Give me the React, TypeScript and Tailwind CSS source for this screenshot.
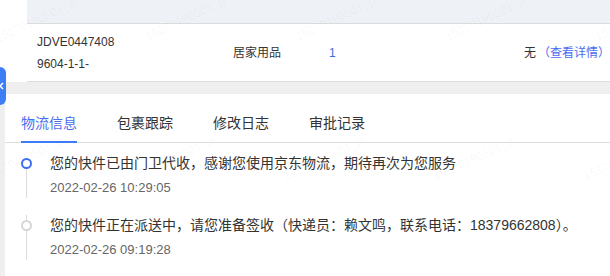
import React from 'react';

const marks = [
  { x: -4, y: 30 }, { x: 146, y: 28 }, { x: 296, y: 28 }, { x: 446, y: 28 }, { x: 596, y: 28 },
  { x: -16, y: 168 }, { x: 134, y: 168 }, { x: 284, y: 168 }, { x: 434, y: 168 }, { x: 584, y: 168 },
];

const tabs = ['物流信息', '包裹跟踪', '修改日志', '审批记录'];

const events = [
  { text: '您的快件已由门卫代收，感谢您使用京东物流，期待再次为您服务', time: '2022-02-26 10:29:05', active: true },
  { text: '您的快件正在派送中，请您准备签收（快递员：赖文鸣，联系电话：18379662808）。', time: '2022-02-26 09:19:28', active: false },
];

const App: React.FC = () => {
  return (
    <div
      className="relative w-[610px] h-[276px] overflow-hidden bg-[#efefef] text-[#333]"
      style={{ fontFamily: '"Liberation Sans", "Noto Sans CJK SC", sans-serif' }}
    >
      {/* order table */}
      <div className="flex bg-white">
        <div className="w-[27px] shrink-0" />
        <div className="flex-1">
          <div className="h-[24px] bg-[#eef1f6] border-b border-[#dcdcdc]" />
          <div className="h-[58px] flex items-center text-[12px] border-b border-[#dcdcdc]">
            <div className="w-[206px] pl-[10px] leading-[22px]">
              <div>JDVE0447408</div>
              <div>9604-1-1-</div>
            </div>
            <div className="w-[96px]">居家用品</div>
            <div className="flex-1 text-[#3b6fd6]">1</div>
            <div className="whitespace-nowrap">
              无<span className="text-[#4a6cf0] ml-[2px]">（查看详情）</span>
            </div>
          </div>
        </div>
      </div>

      <div className="h-[12px]" />

      {/* detail panel */}
      <div className="ml-[5px] bg-white h-full">
        <div className="flex items-end h-[49px] pl-[16px] border-b border-[#dedede]">
          {tabs.map((t, i) => (
            <div
              key={t}
              className={`mr-[40px] -mb-px pb-[8px] text-[14px] leading-[20px] border-b-2 ${
                i === 0 ? 'text-[#4a6cf0] border-[#3d7cf6]' : 'text-[#333] border-transparent'
              }`}
            >
              {t}
            </div>
          ))}
        </div>

        <div className="pl-[16px] pt-[10px]">
          {events.map((e, i) => (
            <div key={i} className={`flex ${i === events.length - 1 ? 'pb-[60px]' : 'pb-[17px]'}`}>
              <div className="relative w-[29px] shrink-0">
                <div
                  className={`absolute left-[5px] w-px bg-[#dcdcdc] bottom-0 ${i === 0 ? 'top-[16px]' : 'top-0'}`}
                />
                <div
                  className={`relative mt-[5px] w-[11px] h-[11px] rounded-full border-2 bg-white ${
                    e.active ? 'border-[#3f6ef5]' : 'border-[#d6d6d6]'
                  }`}
                />
              </div>
              <div>
                <div className="text-[14px] leading-[20px] text-[#333] whitespace-nowrap">{e.text}</div>
                <div className="mt-[5px] text-[13px] leading-[20px] text-[#666]">{e.time}</div>
              </div>
            </div>
          ))}
        </div>
      </div>

      {/* collapse handle */}
      <div className="absolute left-0 top-[67px] w-[6px] h-[38px] rounded-r-[6px] bg-[#3d7ef7] overflow-hidden">
        <svg className="absolute -left-[3px] top-[15px]" width="8" height="8" viewBox="0 0 8 8">
          <path d="M6 1 L3 4 L6 7" stroke="white" strokeWidth="1.5" fill="none" />
        </svg>
      </div>

      {/* watermark */}
      {marks.map((m, i) => (
        <div
          key={i}
          className="absolute pointer-events-none select-none text-[12px] text-black/[0.04] whitespace-nowrap origin-left -rotate-[25deg]"
          style={{ left: m.x, top: m.y }}
        >
          15279190501_p
        </div>
      ))}
    </div>
  );
};

export default App;
